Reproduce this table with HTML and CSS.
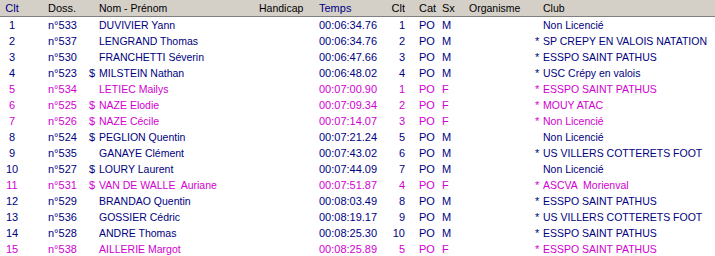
FILE: index.html
```html
<!DOCTYPE html>
<html lang="fr">
<head>
<meta charset="utf-8">
<title>Classement</title>
<link rel="stylesheet" href="styles.css">
</head>
<body>
<div class="list">
  <div class="row head">
    <span class="c clt sorted">Clt</span>
    <span class="c doss">Doss.</span>
    <span class="c dol"></span>
    <span class="c nom">Nom - Prénom</span>
    <span class="c hand">Handicap</span>
    <span class="c temps sorted">Temps</span>
    <span class="c clt2">Clt</span>
    <span class="c cat">Cat</span>
    <span class="c sx">Sx</span>
    <span class="c org">Organisme</span>
    <span class="c star"></span>
    <span class="c club">Club</span>
  </div>
  <div class="row m"><span class="c clt">1</span><span class="c doss">n°533</span><span class="c dol"></span><span class="c nom">DUVIVIER Yann</span><span class="c hand"></span><span class="c temps">00:06:34.76</span><span class="c clt2">1</span><span class="c cat">PO</span><span class="c sx">M</span><span class="c org"></span><span class="c star"></span><span class="c club">Non Licencié</span></div>
  <div class="row m"><span class="c clt">2</span><span class="c doss">n°537</span><span class="c dol"></span><span class="c nom">LENGRAND Thomas</span><span class="c hand"></span><span class="c temps">00:06:34.76</span><span class="c clt2">2</span><span class="c cat">PO</span><span class="c sx">M</span><span class="c org"></span><span class="c star">*</span><span class="c club">SP CREPY EN VALOIS NATATION</span></div>
  <div class="row m"><span class="c clt">3</span><span class="c doss">n°530</span><span class="c dol"></span><span class="c nom">FRANCHETTI Séverin</span><span class="c hand"></span><span class="c temps">00:06:47.66</span><span class="c clt2">3</span><span class="c cat">PO</span><span class="c sx">M</span><span class="c org"></span><span class="c star">*</span><span class="c club">ESSPO SAINT PATHUS</span></div>
  <div class="row m"><span class="c clt">4</span><span class="c doss">n°523</span><span class="c dol">$</span><span class="c nom">MILSTEIN Nathan</span><span class="c hand"></span><span class="c temps">00:06:48.02</span><span class="c clt2">4</span><span class="c cat">PO</span><span class="c sx">M</span><span class="c org"></span><span class="c star">*</span><span class="c club">USC Crépy en valois</span></div>
  <div class="row f"><span class="c clt">5</span><span class="c doss">n°534</span><span class="c dol"></span><span class="c nom">LETIEC Mailys</span><span class="c hand"></span><span class="c temps">00:07:00.90</span><span class="c clt2">1</span><span class="c cat">PO</span><span class="c sx">F</span><span class="c org"></span><span class="c star">*</span><span class="c club">ESSPO SAINT PATHUS</span></div>
  <div class="row f"><span class="c clt">6</span><span class="c doss">n°525</span><span class="c dol">$</span><span class="c nom">NAZE Elodie</span><span class="c hand"></span><span class="c temps">00:07:09.34</span><span class="c clt2">2</span><span class="c cat">PO</span><span class="c sx">F</span><span class="c org"></span><span class="c star">*</span><span class="c club">MOUY ATAC</span></div>
  <div class="row f"><span class="c clt">7</span><span class="c doss">n°526</span><span class="c dol">$</span><span class="c nom">NAZE Cécile</span><span class="c hand"></span><span class="c temps">00:07:14.07</span><span class="c clt2">3</span><span class="c cat">PO</span><span class="c sx">F</span><span class="c org"></span><span class="c star">*</span><span class="c club">Non Licencié</span></div>
  <div class="row m"><span class="c clt">8</span><span class="c doss">n°524</span><span class="c dol">$</span><span class="c nom">PEGLION Quentin</span><span class="c hand"></span><span class="c temps">00:07:21.24</span><span class="c clt2">5</span><span class="c cat">PO</span><span class="c sx">M</span><span class="c org"></span><span class="c star"></span><span class="c club">Non Licencié</span></div>
  <div class="row m"><span class="c clt">9</span><span class="c doss">n°535</span><span class="c dol"></span><span class="c nom">GANAYE Clément</span><span class="c hand"></span><span class="c temps">00:07:43.02</span><span class="c clt2">6</span><span class="c cat">PO</span><span class="c sx">M</span><span class="c org"></span><span class="c star">*</span><span class="c club">US VILLERS COTTERETS FOOT</span></div>
  <div class="row m"><span class="c clt">10</span><span class="c doss">n°527</span><span class="c dol">$</span><span class="c nom">LOURY Laurent</span><span class="c hand"></span><span class="c temps">00:07:44.09</span><span class="c clt2">7</span><span class="c cat">PO</span><span class="c sx">M</span><span class="c org"></span><span class="c star"></span><span class="c club">Non Licencié</span></div>
  <div class="row f"><span class="c clt">11</span><span class="c doss">n°531</span><span class="c dol">$</span><span class="c nom">VAN DE WALLE  Auriane</span><span class="c hand"></span><span class="c temps">00:07:51.87</span><span class="c clt2">4</span><span class="c cat">PO</span><span class="c sx">F</span><span class="c org"></span><span class="c star">*</span><span class="c club">ASCVA  Morienval</span></div>
  <div class="row m"><span class="c clt">12</span><span class="c doss">n°529</span><span class="c dol"></span><span class="c nom">BRANDAO Quentin</span><span class="c hand"></span><span class="c temps">00:08:03.49</span><span class="c clt2">8</span><span class="c cat">PO</span><span class="c sx">M</span><span class="c org"></span><span class="c star">*</span><span class="c club">ESSPO SAINT PATHUS</span></div>
  <div class="row m"><span class="c clt">13</span><span class="c doss">n°536</span><span class="c dol"></span><span class="c nom">GOSSIER Cédric</span><span class="c hand"></span><span class="c temps">00:08:19.17</span><span class="c clt2">9</span><span class="c cat">PO</span><span class="c sx">M</span><span class="c org"></span><span class="c star">*</span><span class="c club">US VILLERS COTTERETS FOOT</span></div>
  <div class="row m"><span class="c clt">14</span><span class="c doss">n°528</span><span class="c dol"></span><span class="c nom">ANDRE Thomas</span><span class="c hand"></span><span class="c temps">00:08:25.30</span><span class="c clt2">10</span><span class="c cat">PO</span><span class="c sx">M</span><span class="c org"></span><span class="c star">*</span><span class="c club">ESSPO SAINT PATHUS</span></div>
  <div class="row f"><span class="c clt">15</span><span class="c doss">n°538</span><span class="c dol"></span><span class="c nom">AILLERIE Margot</span><span class="c hand"></span><span class="c temps">00:08:25.89</span><span class="c clt2">5</span><span class="c cat">PO</span><span class="c sx">F</span><span class="c org"></span><span class="c star">*</span><span class="c club">ESSPO SAINT PATHUS</span></div>
</div>
</body>
</html>
```
FILE: styles.css
```css
html, body {
  margin: 0;
  padding: 0;
  background: #ffffff;
}
body {
  font-family: "Liberation Sans", Arial, sans-serif;
  font-size: 11px;
  width: 715px;
  height: 256px;
  overflow: hidden;
}
.list {
  display: flex;
  flex-direction: column;
}
.row {
  display: flex;
  height: 16px;
  line-height: 16px;
  white-space: pre;
}
.row.head {
  background: #d4d0c8;
  color: #000000;
  border-bottom: 1px solid #808080;
}
.row.m { color: #000080; }
.row.f { color: #d000d0; }
.head .sorted { color: #000080; }
.c {
  flex: none;
  overflow: hidden;
}
.clt { width: 24px; text-align: center; }
.doss { width: 41px; margin-left: 24px; }
.dol { width: 10px; }
.nom { width: 160px; font-size: 10.5px; }
.hand { width: 60px; font-size: 10.5px; }
.temps { width: 66px; }
.clt2 { width: 20px; text-align: right; }
.cat { width: 23px; margin-left: 14px; }
.sx { width: 27px; }
.org { width: 66px; font-size: 10.5px; }
.star { width: 8px; }
.club { flex: 1; font-size: 10.5px; }
```
